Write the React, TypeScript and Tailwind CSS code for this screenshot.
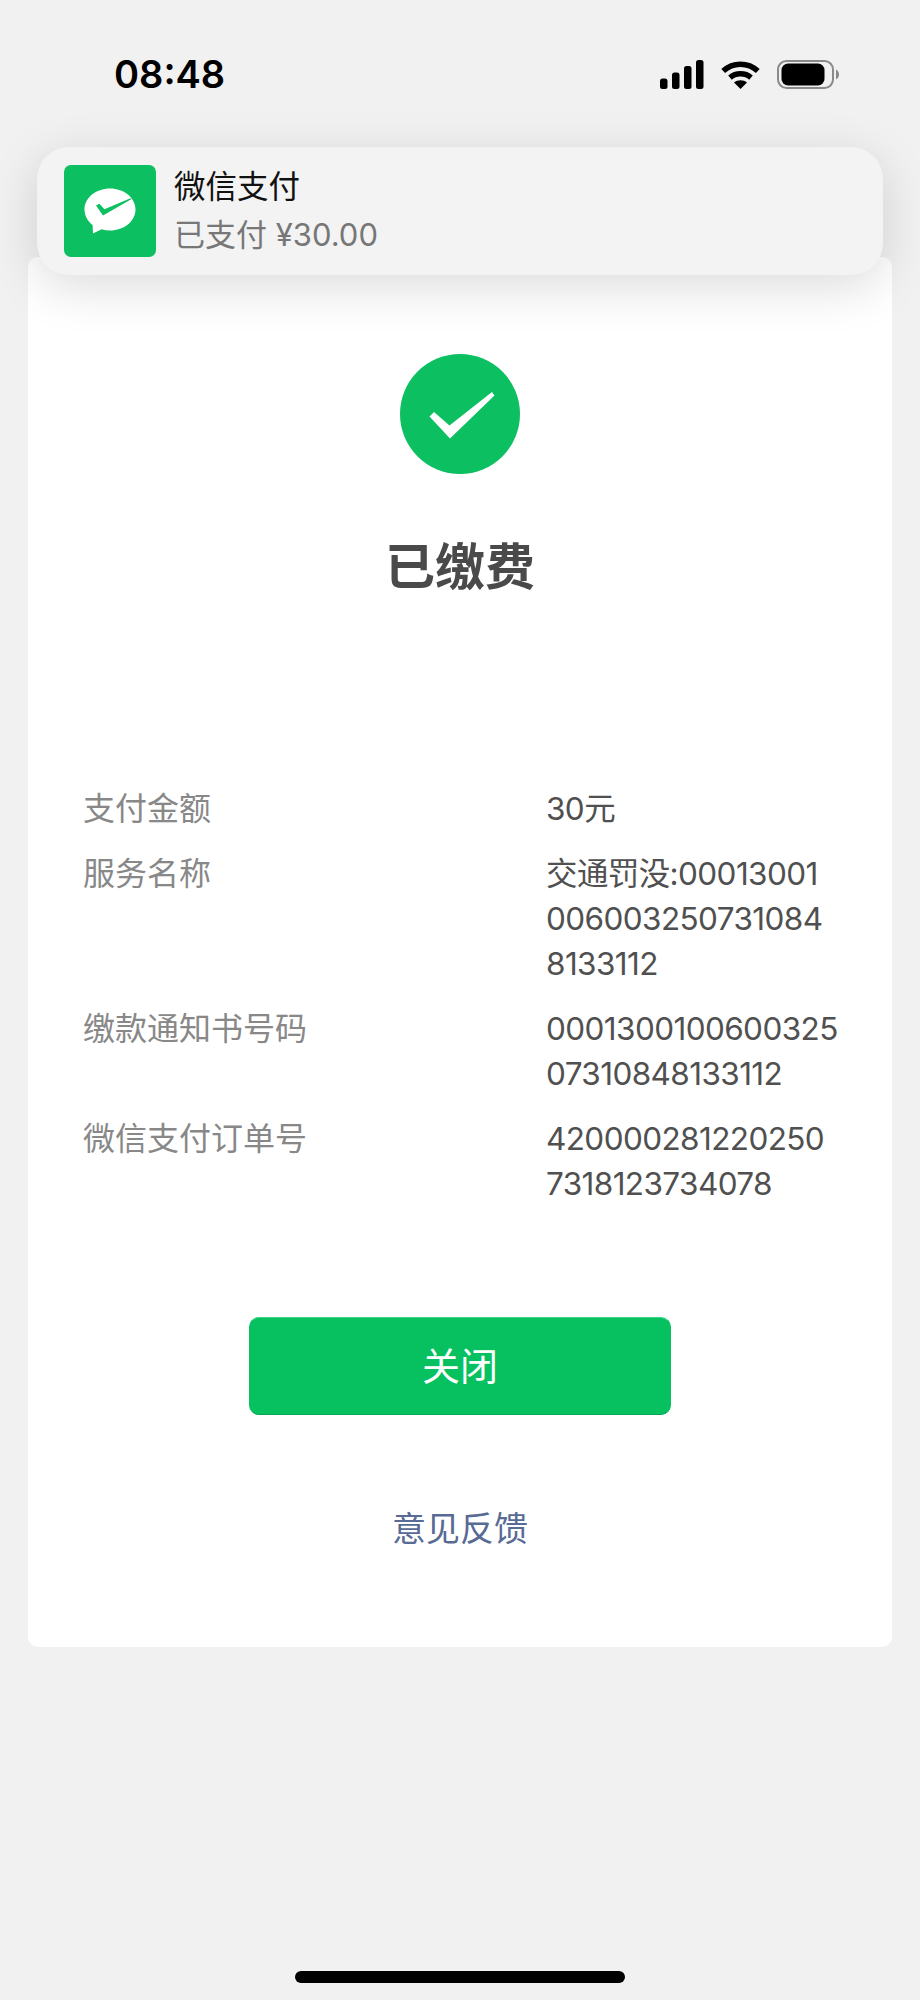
import React from 'react';

const rows = [
  { label: '支付金额', lines: ['30元'] },
  { label: '服务名称', lines: ['交通罚没:00013001', '006003250731084', '8133112'] },
  { label: '缴款通知书号码', lines: ['0001300100600325', '07310848133112'] },
  { label: '微信支付订单号', lines: ['420000281220250', '7318123734078'] },
];

const StatusIcons: React.FC = () => (
  <div className="flex items-start">
    <svg width="44" height="29" viewBox="0 0 44 29" fill="#000">
      <rect x="0" y="18.5" width="7.5" height="10.5" rx="2.5" />
      <rect x="12" y="12.5" width="7.5" height="16.5" rx="2.5" />
      <rect x="24" y="6" width="7.5" height="23" rx="2.5" />
      <rect x="36" y="0" width="7.5" height="29" rx="2.5" />
    </svg>
    <svg className="ml-[17px]" width="39" height="29" viewBox="0 0 39 29" fill="none" stroke="#000" strokeWidth="5.5">
      <path d="M2.2 11C12 2 27 2 36.8 11" />
      <path d="M9 17.6C14.8 12.6 24.2 12.6 30 17.6" />
      <path d="M19.5 29L13 22.6C16.8 19.6 22.2 19.6 26 22.6Z" fill="#000" stroke="none" />
    </svg>
    <svg className="ml-[17px]" width="62" height="29" viewBox="0 0 62 29" fill="none">
      <rect x="1" y="1" width="55" height="27" rx="8.5" stroke="#8a8a8a" strokeWidth="2" />
      <rect x="4.5" y="3.5" width="43" height="22" rx="6.5" fill="#000" />
      <path d="M59 9.5C61 10.5 62 12.5 62 14.5S61 18.5 59 19.5Z" fill="#8a8a8a" />
    </svg>
  </div>
);

const PayLogo: React.FC = () => (
  <svg width="92" height="92" viewBox="0 0 92 92" className="shrink-0">
    <rect width="92" height="92" rx="7" fill="#0cc062" />
    <path d="M46 23.5C60 23.5 71.5 32.8 71.5 44.5S60 65.5 46 65.5C43 65.5 40.2 65.1 37.6 64.3L29 68.5L28.6 60C23.6 56 20.5 50.5 20.5 44.5 20.5 32.8 32 23.5 46 23.5Z" fill="#fff" />
    <path d="M32 40.5L35.4 38.8 40.4 44.2 66.5 33.2 67.2 34.2 39 50.6Z" fill="#0cc062" />
  </svg>
);

const App: React.FC = () => {
  return (
    <div className="relative h-[2000px] w-[920px] overflow-hidden bg-[#f1f1f1] font-['Inter','Noto_Sans_CJK_SC',sans-serif]">
      <div className="flex h-[257px] items-start justify-between pl-[114px] pr-[81px] pt-[51px]">
        <span className="text-[38px] font-semibold leading-[46px] text-black">08:48</span>
        <div className="pt-[9px]">
          <StatusIcons />
        </div>
      </div>

      {/* banner sits over the card */}
      <div className="absolute left-[37px] top-[147px] z-10 flex h-[128px] w-[846px] items-center rounded-[32px] bg-[#f3f3f3] pl-[27px] shadow-[0_12px_50px_rgba(0,0,0,0.14)]">
        <PayLogo />
        <div className="ml-[18px] flex flex-col">
          <span className="text-[31.5px] leading-[48px] text-[#111]">微信支付</span>
          <span className="text-[31px] leading-[48px] text-[#777]">已支付 ¥30.00</span>
        </div>
      </div>

      <div className="mx-[28px] flex w-[864px] flex-col items-center rounded-[10px] bg-white pb-[93px] pt-[97px]">
        <svg width="120" height="120" viewBox="0 0 120 120">
          <circle cx="60" cy="60" r="60" fill="#0cc062" />
          <path d="M29.5 62.5L34 58 49.5 71.5 92 38 94.5 41.5 50 84.5Z" fill="#fff" />
        </svg>
        <h1 className="mt-[63px] text-[50px] font-bold leading-[60px] text-[#4a4a4a]">已缴费</h1>

        <div className="mt-[189px] w-full pl-[55px]">
          {rows.map((row) => (
            <div key={row.label} className="mb-[20px] flex leading-[45px]">
              <div className="w-[463px] shrink-0 text-[32px] text-[#888]">{row.label}</div>
              <div className="whitespace-nowrap text-[31.5px] tracking-[-0.6px] text-[#505050]">
                {row.lines.map((line) => (
                  <div key={line}>{line}</div>
                ))}
              </div>
            </div>
          ))}
        </div>

        <button className="mt-[91px] flex h-[98px] w-[422px] items-center justify-center rounded-[10px] border border-[#07c160] border-t-[#3ad488] border-b-[#06a653] bg-[#07c160] text-[38px] text-white">
          关闭
        </button>
        <a className="mt-[89px] text-[34px] leading-[50px] text-[#576b95]">意见反馈</a>
      </div>

      <div className="ml-[295px] mt-[324px] h-[12px] w-[330px] rounded-full bg-black" />
    </div>
  );
};

export default App;
